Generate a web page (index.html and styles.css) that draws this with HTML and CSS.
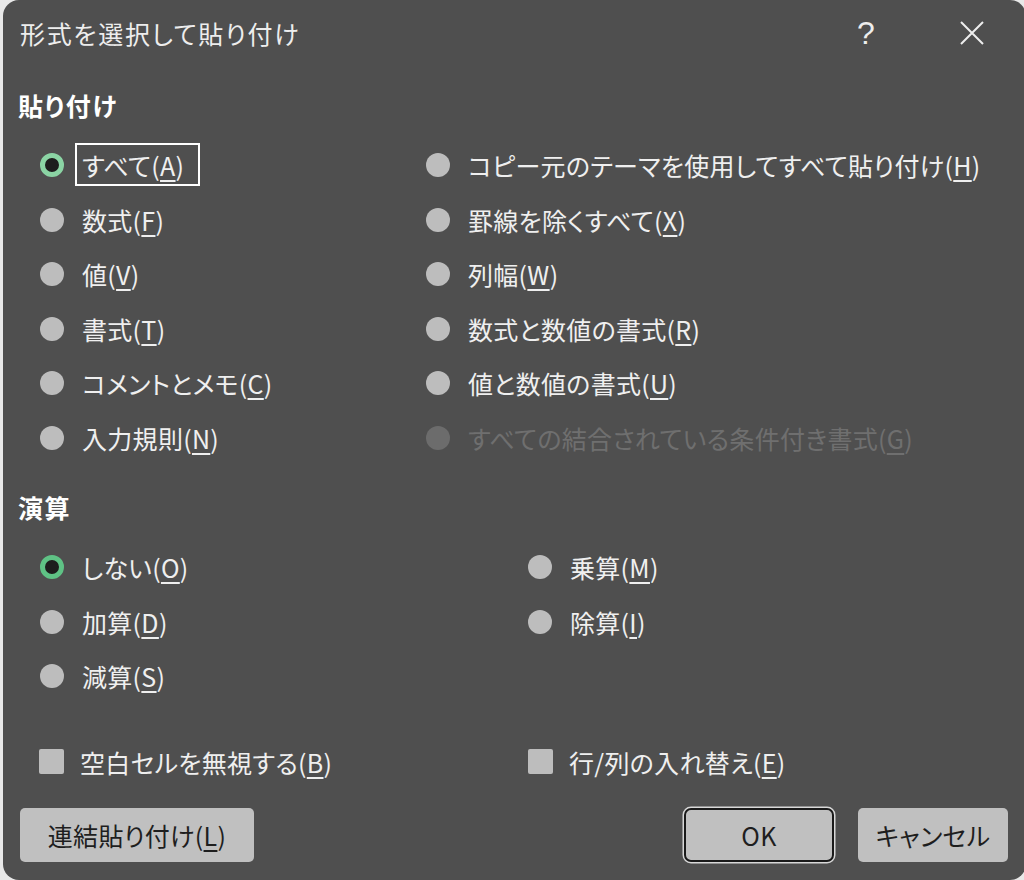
FILE: index.html
```html
<!DOCTYPE html>
<html lang="ja">
<head>
<meta charset="utf-8">
<title>形式を選択して貼り付け</title>
<link rel="stylesheet" href="styles.css">
</head>
<body>
<div class="dialog">
  <div class="titlebar">
    <div class="title">形式を選択して貼り付け</div>
    <div class="help">?</div>
    <svg class="close" width="28" height="28" viewBox="0 0 28 28"><path d="M3 3 L25 25 M25 3 L3 25" stroke="#eeeeee" stroke-width="2" fill="none"/></svg>
  </div>

  <div class="section-title">貼り付け</div>
  <div class="grid paste">
    <div class="opt"><span class="radio on focus"></span><span class="label focusbox">すべて(<u>A</u>)</span></div>
    <div class="opt"><span class="radio"></span><span class="label">コピー元のテーマを使用してすべて貼り付け(<u>H</u>)</span></div>
    <div class="opt"><span class="radio"></span><span class="label">数式(<u>F</u>)</span></div>
    <div class="opt"><span class="radio"></span><span class="label">罫線を除くすべて(<u>X</u>)</span></div>
    <div class="opt"><span class="radio"></span><span class="label">値(<u>V</u>)</span></div>
    <div class="opt"><span class="radio"></span><span class="label">列幅(<u>W</u>)</span></div>
    <div class="opt"><span class="radio"></span><span class="label">書式(<u>T</u>)</span></div>
    <div class="opt"><span class="radio"></span><span class="label">数式と数値の書式(<u>R</u>)</span></div>
    <div class="opt"><span class="radio"></span><span class="label">コメントとメモ(<u>C</u>)</span></div>
    <div class="opt"><span class="radio"></span><span class="label">値と数値の書式(<u>U</u>)</span></div>
    <div class="opt"><span class="radio"></span><span class="label">入力規則(<u>N</u>)</span></div>
    <div class="opt disabled"><span class="radio"></span><span class="label">すべての結合されている条件付き書式(<u>G</u>)</span></div>
  </div>

  <div class="section-title op-title">演算</div>
  <div class="grid ops">
    <div class="opt"><span class="radio on"></span><span class="label">しない(<u>O</u>)</span></div>
    <div class="opt"><span class="radio"></span><span class="label">乗算(<u>M</u>)</span></div>
    <div class="opt"><span class="radio"></span><span class="label">加算(<u>D</u>)</span></div>
    <div class="opt"><span class="radio"></span><span class="label">除算(<u>I</u>)</span></div>
    <div class="opt"><span class="radio"></span><span class="label">減算(<u>S</u>)</span></div>
    <div class="opt"></div>
  </div>

  <div class="grid checks">
    <div class="opt"><span class="check"></span><span class="label">空白セルを無視する(<u>B</u>)</span></div>
    <div class="opt"><span class="check"></span><span class="label">行/列の入れ替え(<u>E</u>)</span></div>
  </div>

  <div class="buttons">
    <button class="btn link">連結貼り付け(<u>L</u>)</button>
    <div class="spacer"></div>
    <button class="btn ok">OK</button>
    <button class="btn cancel">キャンセル</button>
  </div>
</div>
</body>
</html>
```

FILE: styles.css
```css
html, body {
  margin: 0;
  padding: 0;
  background: #e9e9e9;
  width: 1024px;
  height: 880px;
  overflow: hidden;
}
.dialog {
  box-sizing: border-box;
  margin-left: 3px;
  width: 1023px;
  height: 880px;
  background: #4f4f4f;
  border-radius: 16px;
  color: #efefef;
  font-family: "Noto Sans CJK JP", "Noto Sans", sans-serif;
  font-size: 25px;
  letter-spacing: 0.3px;
  font-feature-settings: "palt";
  overflow: hidden;
}
.titlebar {
  height: 66px;
  display: flex;
  align-items: center;
  padding-left: 17px;
}
.title {
  flex: 1;
  font-size: 25px;
  letter-spacing: 1.7px;
  color: #ededed;
}
.help {
  font-family: "Liberation Sans", sans-serif;
  font-size: 32px;
  font-weight: 300;
  width: 20px;
  text-align: center;
  margin-right: 82px;
  color: #ededed;
}
.close {
  margin-right: 40px;
}
.section-title {
  margin-top: 22px;
  height: 34px;
  line-height: 34px;
  padding-left: 15px;
  font-weight: 700;
  font-size: 25px;
  letter-spacing: 1.5px;
  color: #ffffff;
}
.op-title {
  margin-top: 24.7px;
}
.grid {
  display: grid;
  grid-auto-rows: 54.6px;
}
.paste {
  margin-top: 15.7px;
  padding-left: 37px;
  grid-template-columns: 386px 1fr;
}
.ops {
  margin-top: 15.7px;
  padding-left: 37px;
  grid-template-columns: 488px 1fr;
}
.checks {
  margin-top: 31.2px;
  padding-left: 36px;
  grid-template-columns: 489px 1fr;
}
.opt {
  display: flex;
  align-items: center;
  white-space: nowrap;
}
.radio {
  width: 24px;
  height: 24px;
  border-radius: 50%;
  background: #bdbdbd;
  flex: none;
  margin-right: 18px;
  box-sizing: border-box;
}
.radio.on {
  background: #1d1d1d;
  border: 5px solid #5fc285;
}
.radio.on.focus {
  border-color: #8bd4a4;
}
.label {
  line-height: 34px;
}
.focusbox {
  outline: 2px solid #ffffff;
  outline-offset: 0;
  padding: 3px 14px 2px 5px;
  margin-left: -5px;
}
u {
  text-decoration: underline;
  text-decoration-thickness: 1.5px;
  text-underline-offset: 4px;
}
.disabled .radio {
  background: #6c6c6c;
}
.disabled .label {
  color: #6f6f6f;
}
.check {
  width: 25px;
  height: 25px;
  background: #bdbdbd;
  border-radius: 2px;
  flex: none;
  margin-right: 16px;
}
.buttons {
  display: flex;
  margin-top: 18.7px;
  padding-left: 17px;
  height: 54px;
}
.spacer {
  flex: 1;
}
.btn {
  font-family: "Noto Sans CJK JP", "Noto Sans", sans-serif;
  font-feature-settings: "palt";
  font-size: 25px;
  letter-spacing: 0.3px;
  color: #1e1e1e;
  background: #c0c0c0;
  border: none;
  border-radius: 5px;
  height: 54px;
  padding: 0;
}
.btn.link {
  width: 234px;
}
.btn.ok {
  width: 150px;
  border: 2px solid #1a1a1a;
  box-shadow: 0 0 0 1.5px #d8d8d8;
  border-radius: 7px;
}
.btn.cancel {
  width: 150px;
  margin-left: 24px;
  margin-right: 18px;
}
```
